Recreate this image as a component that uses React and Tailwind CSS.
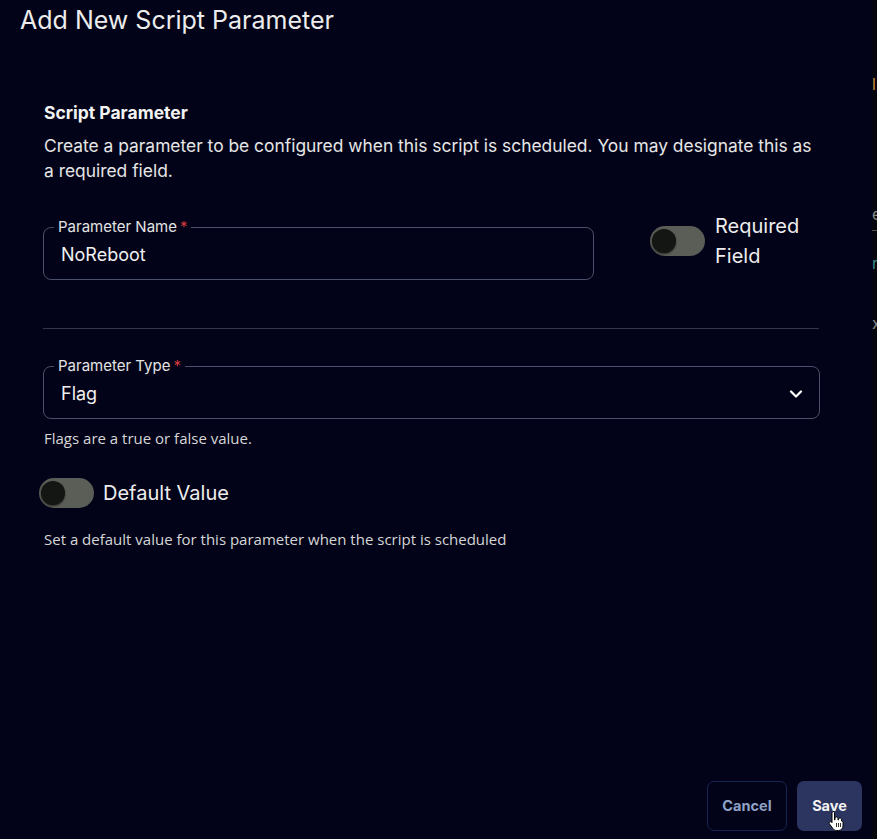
import React from "react";

const inter = { fontFamily: "Inter, 'Noto Sans', sans-serif" };
const openSans = { fontFamily: "'Open Sans', sans-serif" };

function Toggle({ className = "" }) {
  return (
    <span className={`inline-flex h-[30px] w-[55px] shrink-0 items-center rounded-full bg-[#5b5d57] pl-[2px] ${className}`}>
      <span className="h-[24px] w-[24px] rounded-full bg-[#141614] shadow-[0_1px_2px_rgba(0,0,0,0.6)]" />
    </span>
  );
}

function OutlinedField({ label, value, children, className = "" }) {
  return (
    <fieldset className={`rounded-[8px] border border-[#4a4f6b] px-[17px] pt-[7px] pb-[12px] ${className}`}>
      <legend className="ml-[-7px] px-[4px] text-[15px] leading-[18px] text-[#e4e4e4]">
        {label}
        <span className="ml-[3px] text-[#d23b3b]">*</span>
      </legend>
      <div className="flex h-[24px] items-center justify-between">
        <span className="text-[18px] leading-[24px] text-[#f0f0f0]">{value}</span>
        {children}
      </div>
    </fieldset>
  );
}

function HandCursor() {
  return (
    <svg width="17" height="23" viewBox="0 0 17 23" className="absolute left-[31px] top-[29px]">
      <path
        d="M5 1.5c.8 0 1.5.7 1.5 1.5v7h.5V8.5c0-.8.7-1.5 1.5-1.5S10 7.7 10 8.5V10h.5V9.5c0-.8.7-1.5 1.5-1.5s1.5.7 1.5 1.5V11h.3c.8 0 1.2.6 1.2 1.4V16c0 2.5-2 4.5-4.5 4.5H8.5c-1.3 0-2.5-.6-3.3-1.6L1.5 14c-.5-.6-.4-1.5.2-2s1.5-.4 2 .2l.3.4V3c0-.8.7-1.5 1.5-1.5z"
        fill="#ffffff"
        stroke="#000000"
        strokeWidth="1"
      />
      <path d="M8.5 13v4M10.5 13v4M12.5 13v4" stroke="#000000" strokeWidth="0.8" />
    </svg>
  );
}

export default function App() {
  return (
    <div className="flex h-[839px] w-[877px] overflow-hidden bg-[#05050d]" style={inter}>
      <div className="flex w-[872px] shrink-0 flex-col bg-[#020318]">
        <h1 className="pl-[20px] pt-[4px] text-[25px] leading-[32px] font-normal text-[#ececec]">
          Add New Script Parameter
        </h1>

        <div className="mt-[65px] w-[820px] pl-[43px]">
          <h2 className="pl-px text-[17.5px] leading-[24px] font-bold text-[#f2f2f2]">Script Parameter</h2>
          <p className="mt-[8px] pl-px text-[17.4px] leading-[25px] text-[#e6e6e6]">
            Create a parameter to be configured when this script is scheduled. You may designate this as a required
            field.
          </p>

          <div className="mt-[28px] flex items-start">
            <OutlinedField label="Parameter Name" value="NoReboot" className="mt-[7px] w-[551px]" />
            <Toggle className="ml-[56px] mt-[15px]" />
            <span className="ml-[10px] w-[100px] text-[20px] leading-[30px] text-[#ededed]">Required Field</span>
          </div>

          <div className="mt-[48px] h-px w-[776px] bg-[#33374a]" />

          <OutlinedField label="Parameter Type" value="Flag" className="mt-[28px] w-[777px]">
            <svg width="14" height="9" viewBox="0 0 14 9" className="mr-[-1px]">
              <path d="M2 1.5l5 5 5-5" fill="none" stroke="#ffffff" strokeWidth="2.2" strokeLinecap="round" strokeLinejoin="round" />
            </svg>
          </OutlinedField>

          <p className="mt-[9px] pl-px text-[15px] leading-[20px] text-[#d6d6d6]" style={openSans}>
            Flags are a true or false value.
          </p>

          <div className="ml-[-4px] mt-[30px] flex items-center">
            <Toggle />
            <span className="ml-[9px] text-[20px] leading-[30px] text-[#ededed]">Default Value</span>
          </div>

          <p className="mt-[21px] pl-px text-[15px] leading-[20px] text-[#d6d6d6]" style={openSans}>
            Set a default value for this parameter when the script is scheduled
          </p>
        </div>

        <div className="mt-auto flex justify-end gap-[10px] pb-[8px] pr-[10px]">
          <button className="h-[50px] w-[80px] rounded-[7px] border border-[#17244f] text-[14.5px] font-bold text-[#8fa2c6]">
            Cancel
          </button>
          <button className="relative h-[50px] w-[65px] rounded-[7px] bg-[#2b3560] text-[14.5px] font-bold text-[#f4f4f4]">
            Save
            <HandCursor />
          </button>
        </div>
      </div>

      <div className="flex w-[5px] shrink-0 flex-col text-[16px] leading-[20px]">
        <span className="mt-[74px] text-[#c58a3a]">l</span>
        <span className="mt-[110px] text-[#8a8a8a]">e</span>
        <div className="mt-[6px] h-px w-full bg-[#55524a]" />
        <span className="mt-[22px] text-[#3a8a8a]">r</span>
        <span className="mt-[40px] text-[#8a8a8a]">x</span>
      </div>
    </div>
  );
}
